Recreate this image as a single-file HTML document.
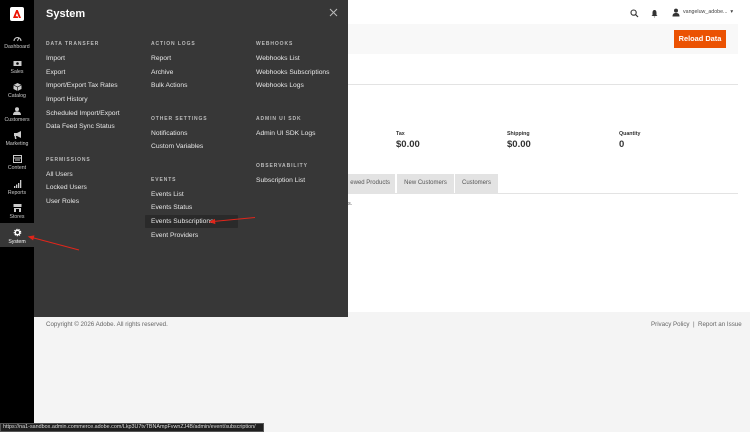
<!DOCTYPE html>
<html><head><style>
*{margin:0;padding:0;box-sizing:border-box}
body{width:750px;height:432px;overflow:hidden;position:relative;background:#fff;font-family:"Liberation Sans",sans-serif}
.a{position:absolute;white-space:nowrap}
.sb{left:0;top:0;width:34px;height:432px;background:#000}
.ni{position:absolute;left:0;width:34px;text-align:center;color:#ccc;font-size:5.2px}
.ni svg{display:block;margin:0 auto 2px}
.fly{left:34px;top:0;width:314px;height:317px;background:#373737}
.h{font-size:5px;font-weight:bold;color:#bbb;letter-spacing:.9px}
.l{font-size:6.7px;color:#e8e8e8}
</style></head><body>
<div class="a" style="left:348px;top:24px;width:390px;height:30px;background:#f8f8f8"></div>
<div class="a" style="left:348px;top:84px;width:390px;height:1px;background:#e3e3e3"></div>
<div class="a" style="left:674px;top:30px;width:52px;height:18px;background:#eb5202;color:#fff;font-size:7.4px;font-weight:bold;line-height:18px;text-align:center">Reload Data</div>
<svg class="a" style="left:630px;top:9px" width="9" height="9" viewBox="0 0 9 9"><circle cx="3.6" cy="3.6" r="2.6" fill="none" stroke="#333" stroke-width="1.1"/><path d="M5.5 5.5L8 8" stroke="#333" stroke-width="1.2"/></svg>
<svg class="a" style="left:651px;top:9px" width="7" height="9" viewBox="0 0 7 9"><path d="M3.5 1C2 1 1.5 2.3 1.5 4V6L.5 7H6.5L5.5 6V4C5.5 2.3 5 1 3.5 1ZM2.7 7.6H4.3L3.5 8.6Z" fill="#333"/></svg>
<svg class="a" style="left:672px;top:8px" width="8" height="9" viewBox="0 0 8 9"><circle cx="4" cy="2.6" r="2" fill="#333"/><path d="M0.5 8.5C0.5 5.5 2 5 4 5S7.5 5.5 7.5 8.5Z" fill="#333"/></svg>
<div class="a" style="left:683px;top:9px;font-size:5.3px;color:#444">vangeluw_adobe... &nbsp;▾</div>
<div class="a" style="left:396px;top:131px;font-size:5.3px;font-weight:bold;color:#333">Tax</div>
<div class="a" style="left:396px;top:139px;font-size:9.5px;font-weight:bold;color:#333">$0.00</div>
<div class="a" style="left:507px;top:131px;font-size:5.3px;font-weight:bold;color:#333">Shipping</div>
<div class="a" style="left:507px;top:139px;font-size:9.5px;font-weight:bold;color:#333">$0.00</div>
<div class="a" style="left:619px;top:131px;font-size:5.3px;font-weight:bold;color:#333">Quantity</div>
<div class="a" style="left:619px;top:139px;font-size:9.5px;font-weight:bold;color:#333">0</div>
<div class="a" style="left:348px;top:174px;width:47px;height:19px;background:#e3e3e3;font-size:6px;color:#555;line-height:19px;text-align:right;padding-right:5px">ewed Products</div>
<div class="a" style="left:397px;top:174px;width:57px;height:19px;background:#e3e3e3;font-size:6px;color:#555;line-height:19px;text-align:center">New Customers</div>
<div class="a" style="left:455px;top:174px;width:43px;height:19px;background:#e3e3e3;font-size:6px;color:#555;line-height:19px;text-align:center">Customers</div>
<div class="a" style="left:348px;top:193px;width:390px;height:1px;background:#e3e3e3"></div>
<div class="a" style="left:348px;top:201px;font-size:5.5px;color:#555">s.</div>
<div class="a" style="left:34px;top:312px;width:716px;height:120px;background:#f4f4f4"></div>
<div class="a" style="left:46px;top:321px;font-size:6.2px;color:#666">Copyright © 2026 Adobe. All rights reserved.</div>
<div class="a" style="left:651px;top:321px;font-size:6.2px;color:#666">Privacy Policy &nbsp;| &nbsp;Report an Issue</div>
<div class="a sb"></div>
<div class="a" style="left:10px;top:7px;width:14px;height:14px;background:#fff;border-radius:2px"><svg width="14" height="14" viewBox="0 0 14 14"><path d="M3 11L6.2 3H7.8L11 11H9L7 5.8L5.6 9.2H7.6L8.2 11Z" fill="#eb1000"/></svg></div>
<div class="ni" style="top:35px"><svg width="9" height="7" viewBox="0 0 9 7"><path d="M1 6A3.5 3.5 0 1 1 8 6" fill="none" stroke="#ccc" stroke-width="1.1"/><path d="M4.5 6L5.8 3" stroke="#ccc"/></svg>Dashboard</div>
<div class="ni" style="top:59px"><svg width="9" height="8" viewBox="0 0 9 8"><rect x=".5" y="2" width="8" height="5" fill="#ccc"/><circle cx="4.5" cy="4.5" r="1.3" fill="#000"/></svg>Sales</div>
<div class="ni" style="top:83px"><svg width="9" height="8" viewBox="0 0 9 8"><path d="M4.5 0L8.5 2V6L4.5 8L.5 6V2Z" fill="#ccc"/><path d="M.5 2L4.5 4L8.5 2M4.5 4V8" stroke="#000" stroke-width=".6" fill="none"/></svg>Catalog</div>
<div class="ni" style="top:107px"><svg width="9" height="8" viewBox="0 0 9 8"><circle cx="4" cy="2.3" r="2" fill="#ccc"/><path d="M0 8C0 5 2 4.5 4 4.5S8 5 8 8Z" fill="#ccc"/></svg>Customers</div>
<div class="ni" style="top:131px"><svg width="9" height="8" viewBox="0 0 9 8"><path d="M1 2H4L8 0V7L4 5H3L3.5 8H2L1.5 5H1Z" fill="#ccc"/></svg>Marketing</div>
<div class="ni" style="top:155px"><svg width="9" height="8" viewBox="0 0 9 8"><rect x=".5" y=".5" width="8" height="7" fill="none" stroke="#ccc"/><path d="M1 3H8M2 5H7" stroke="#ccc"/></svg>Content</div>
<div class="ni" style="top:180px"><svg width="9" height="8" viewBox="0 0 9 8"><path d="M1 6h1.3v2H1zM3 4.5h1.3V8H3zM5 3h1.3v5H5zM7 0h1.3v8H7z" fill="#ccc"/></svg>Reports</div>
<div class="ni" style="top:204px"><svg width="9" height="8" viewBox="0 0 9 8"><rect x=".5" y="0" width="8" height="3" fill="#ccc"/><rect x="1" y="4" width="7" height="4" fill="#ccc"/><rect x="3" y="5" width="3" height="3" fill="#000"/></svg>Stores</div>
<div class="a" style="left:0;top:223px;width:34px;height:24px;background:#373737"></div>
<div class="ni" style="top:228px;color:#fff"><svg width="9" height="9" viewBox="0 0 9 9"><circle cx="4.5" cy="4.5" r="3" fill="none" stroke="#fff" stroke-width="1.6" stroke-dasharray="1.2 .9"/><circle cx="4.5" cy="4.5" r="2.2" fill="none" stroke="#fff" stroke-width="1.3"/></svg>System</div>
<div class="a fly"></div>
<div class="a" style="left:46px;top:8px;font-size:11px;font-weight:bold;color:#fff">System</div>
<svg class="a" style="left:329px;top:8px" width="9" height="9" viewBox="0 0 9 9"><path d="M1 1L8 8M8 1L1 8" stroke="#bbb" stroke-width="1"/></svg>
<div class="a" style="left:145px;top:215px;width:93px;height:13px;background:#2a2a2a;border-radius:1px"></div>
<div class="a h" style="left:46px;top:41px">DATA TRANSFER</div>
<div class="a l" style="left:46px;top:55px">Import</div>
<div class="a l" style="left:46px;top:69px">Export</div>
<div class="a l" style="left:46px;top:82px">Import/Export Tax Rates</div>
<div class="a l" style="left:46px;top:96px">Import History</div>
<div class="a l" style="left:46px;top:110px">Scheduled Import/Export</div>
<div class="a l" style="left:46px;top:123px">Data Feed Sync Status</div>
<div class="a h" style="left:46px;top:157px">PERMISSIONS</div>
<div class="a l" style="left:46px;top:171px">All Users</div>
<div class="a l" style="left:46px;top:184px">Locked Users</div>
<div class="a l" style="left:46px;top:198px">User Roles</div>
<div class="a h" style="left:151px;top:41px">ACTION LOGS</div>
<div class="a l" style="left:151px;top:55px">Report</div>
<div class="a l" style="left:151px;top:69px">Archive</div>
<div class="a l" style="left:151px;top:82px">Bulk Actions</div>
<div class="a h" style="left:151px;top:116px">OTHER SETTINGS</div>
<div class="a l" style="left:151px;top:130px">Notifications</div>
<div class="a l" style="left:151px;top:143px">Custom Variables</div>
<div class="a h" style="left:151px;top:177px">EVENTS</div>
<div class="a l" style="left:151px;top:191px">Events List</div>
<div class="a l" style="left:151px;top:204px">Events Status</div>
<div class="a l" style="left:151px;top:218px">Events Subscriptions</div>
<div class="a l" style="left:151px;top:232px">Event Providers</div>
<div class="a h" style="left:256px;top:41px">WEBHOOKS</div>
<div class="a l" style="left:256px;top:55px">Webhooks List</div>
<div class="a l" style="left:256px;top:69px">Webhooks Subscriptions</div>
<div class="a l" style="left:256px;top:82px">Webhooks Logs</div>
<div class="a h" style="left:256px;top:116px">ADMIN UI SDK</div>
<div class="a l" style="left:256px;top:130px">Admin UI SDK Logs</div>
<div class="a h" style="left:256px;top:163px">OBSERVABILITY</div>
<div class="a l" style="left:256px;top:177px">Subscription List</div>
<svg class="a" style="left:0;top:0" width="750" height="432"><g stroke="#e0261b" stroke-width="1" fill="#e0261b"><path d="M255 217.5L213 221.5"/><path d="M210 221.8L214.5 219.6L214.8 223.4Z"/><path d="M79 250L32 237.5"/><path d="M29 236.8L33.8 236L32.8 239.6Z"/></g></svg>
<div class="a" style="left:0;top:423px;width:264px;height:9px;background:#1f1f1f;border:1px solid #555;color:#ddd;font-size:5.4px;line-height:7px;padding-left:2px">https://na1-sandbox.admin.commerce.adobe.com/Lkp3U7tvTBNAmpFvwnZJ4B/admin/event/subscription/</div>
</body></html>
